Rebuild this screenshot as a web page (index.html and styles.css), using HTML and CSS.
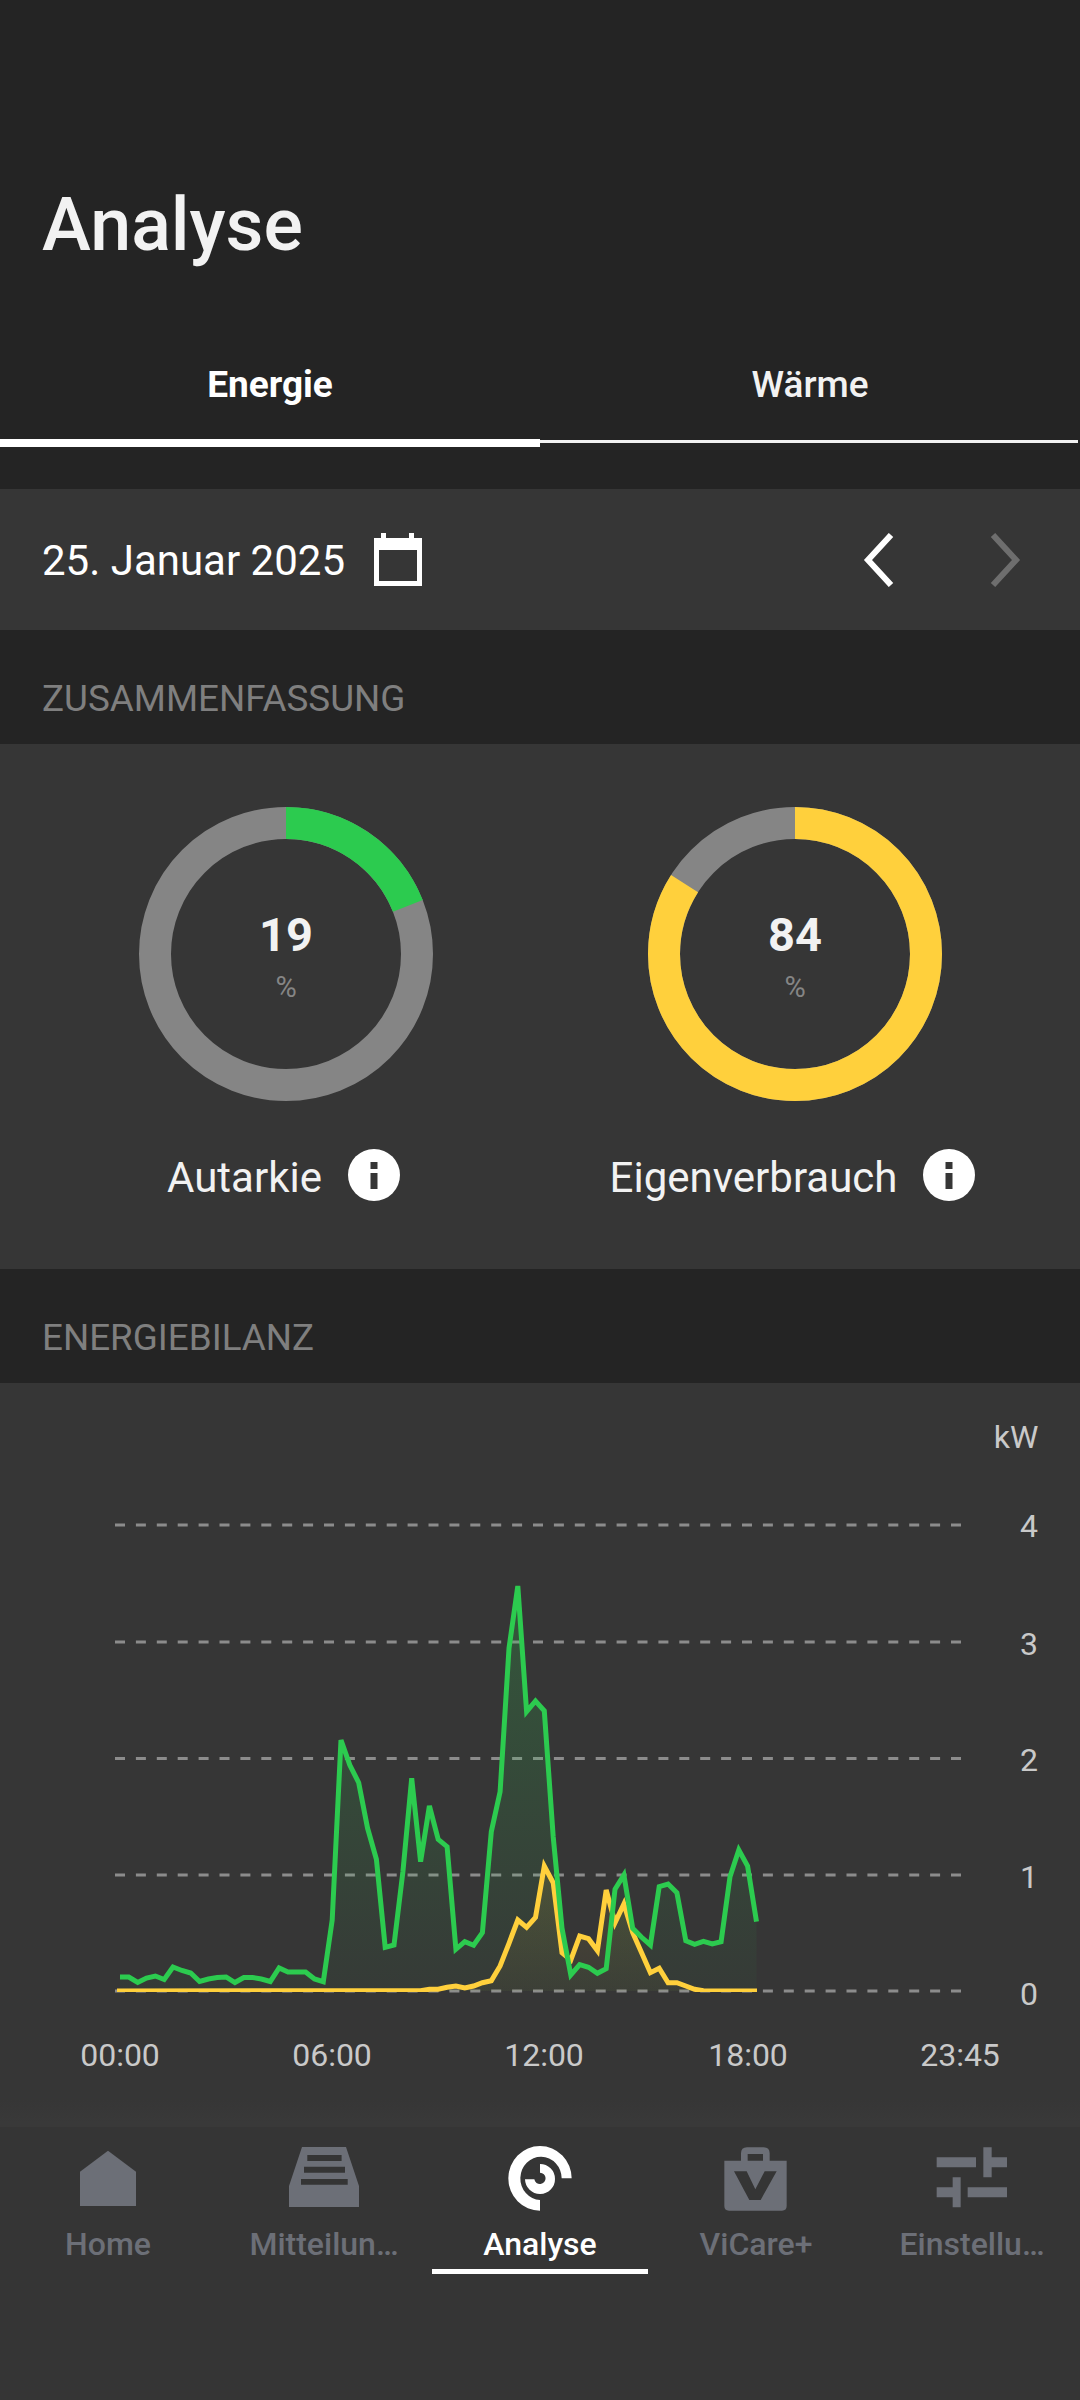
FILE: index.html
```html
<!DOCTYPE html>
<html lang="de">
<head>
    <meta charset="UTF-8">
    <meta name="viewport" content="width=device-width, initial-scale=1.0">
    <title>Analyse</title>
    <link rel="stylesheet" href="styles.css">
</head>
<body>
    <header class="page-header">
        <h1 class="page-title">Analyse</h1>
    </header>

    <div class="tabs">
        <div class="tab active">Energie</div>
        <div class="tab">Wärme</div>
    </div>

    <div class="date-row">
        <span class="date-text">25. Januar 2025</span>
        <svg class="calendar-icon" width="48" height="54" viewBox="0 0 48 54">
            <path fill="#fff" fill-rule="evenodd" d="M7 0h5v5h23V0h5v5h8v48H0V5h7zM5 17v31h38V17z"/>
        </svg>
        <div class="date-arrows">
            <svg width="32" height="54" viewBox="0 0 32 54"><path class="arrow" stroke="#fff" d="M29 2 6 27l23 25" /></svg>
            <svg width="32" height="54" viewBox="0 0 32 54"><path class="arrow" stroke="#6e6e6e" d="M4 2l23 25L4 52" /></svg>
        </div>
    </div>

    <div class="section-label">ZUSAMMENFASSUNG</div>

    <section class="summary">
        <div class="gauge">
            <svg class="donut" width="294" height="294" viewBox="0 0 294 294">
                <circle class="donut-track" cx="147" cy="147" r="131"/>
                <circle class="donut-value green" cx="147" cy="147" r="131" stroke-dasharray="156.4 823.1" transform="rotate(-90 147 147)"/>
                <text class="donut-number" x="147" y="144">19</text>
                <text class="donut-unit" x="147" y="190">%</text>
            </svg>
            <div class="gauge-label">
                <span class="gauge-text">Autarkie</span>
                <svg width="52" height="52" viewBox="0 0 52 52">
                    <circle cx="26" cy="26" r="26" fill="#fff"/>
                    <path fill="#363636" d="M22.5 13h7v7h-7zM22.5 24h7v16h-7z"/>
                </svg>
            </div>
        </div>
        <div class="gauge">
            <svg class="donut" width="294" height="294" viewBox="0 0 294 294">
                <circle class="donut-track" cx="147" cy="147" r="131"/>
                <circle class="donut-value yellow" cx="147" cy="147" r="131" stroke-dasharray="691.4 823.1" transform="rotate(-90 147 147)"/>
                <text class="donut-number" x="147" y="144">84</text>
                <text class="donut-unit" x="147" y="190">%</text>
            </svg>
            <div class="gauge-label">
                <span class="gauge-text">Eigenverbrauch</span>
                <svg width="52" height="52" viewBox="0 0 52 52">
                    <circle cx="26" cy="26" r="26" fill="#fff"/>
                    <path fill="#363636" d="M22.5 13h7v7h-7zM22.5 24h7v16h-7z"/>
                </svg>
            </div>
        </div>
    </section>

    <div class="section-label">ENERGIEBILANZ</div>

    <section class="chart-card">
        <svg class="chart" width="1080" height="744" viewBox="0 1383 1080 744">
            <defs>
                <linearGradient id="greenFill" gradientUnits="userSpaceOnUse" x1="0" y1="1586" x2="0" y2="1991">
                    <stop offset="0" stop-color="#2ccb4f" stop-opacity="0.22"/>
                    <stop offset="1" stop-color="#2ccb4f" stop-opacity="0.03"/>
                </linearGradient>
                <linearGradient id="yellowFill" gradientUnits="userSpaceOnUse" x1="0" y1="1866" x2="0" y2="1991">
                    <stop offset="0" stop-color="#ffd03c" stop-opacity="0.12"/>
                    <stop offset="1" stop-color="#ffd03c" stop-opacity="0.03"/>
                </linearGradient>
                <clipPath id="plotClip">
                    <rect x="100" y="1500" width="880" height="492"/>
                </clipPath>
            </defs>

            <path class="grid" d="M115 1525H967M115 1642H967M115 1758.500H967M115 1875H967M115 1991H967"/>

            <path fill="url(#greenFill)" d="M120 1991V1977L128.8 1977 137.7 1982.5 146.5 1978 155.4 1976 164.2 1979.5 173 1967 181.9 1970.5 190.7 1973 199.6 1981.5 208.4 1979 217.2 1977.5 226.1 1977 234.9 1982.5 243.8 1977.5 252.6 1977.5 261.4 1979 270.3 1981.5 279.1 1968 288 1972 296.8 1972 305.6 1972 314.5 1979 323.3 1981.7 332.2 1920 341 1740 349.8 1765 358.7 1782.7 367.6 1828.3 376.4 1859.3 385.2 1947.3 394 1945 402.9 1871.7 411.7 1778.3 420.6 1861.7 429.4 1806 438.2 1839.3 447.1 1846.7 455.9 1949.3 464.8 1941.7 473.6 1945.3 482.4 1932.7 491.3 1831.7 500.1 1791.7 509 1648.3 517.8 1586 526.6 1711.7 535.5 1701 544.3 1710.7 553.2 1836.7 562 1928.3 570.8 1975 579.7 1964.7 588.5 1967.3 597.4 1973.3 606.2 1968.7 615 1889.3 623.9 1875 632.7 1928.3 641.6 1937.3 650.4 1945 659.2 1886.7 668.1 1884 676.9 1892.7 685.8 1940.7 694.6 1944.3 703.4 1941.3 712.3 1944 721.1 1941.7 730 1876.7 738.8 1850 747.6 1866 756.5 1921.7V1991Z"/>
            <path fill="url(#yellowFill)" d="M420.6 1991L429.4 1989.3 438.2 1989.3 447.1 1987.3 455.9 1986 464.8 1988 473.6 1986 482.4 1982.7 491.3 1980.7 500.1 1966 509 1943.3 517.8 1920 526.6 1927.3 535.5 1917.3 544.3 1866 553.2 1882.7 562 1952.7 570.8 1960 579.7 1936 588.5 1938.7 597.4 1950.7 606.2 1890 615 1922.7 623.9 1904 632.7 1932.7 641.6 1952.7 650.4 1972.7 659.2 1968.3 668.1 1982.7 676.9 1982.7 685.8 1986 694.6 1989.3 703.4 1991Z"/>

            <polyline class="line yellow-line" clip-path="url(#plotClip)" points="117,1991 420.6,1990.7 429.4,1989.3 438.2,1989.3 447.1,1987.3 455.9,1986 464.8,1988 473.6,1986 482.4,1982.7 491.3,1980.7 500.1,1966 509,1943.3 517.8,1920 526.6,1927.3 535.5,1917.3 544.3,1866 553.2,1882.7 562,1952.7 570.8,1960 579.7,1936 588.5,1938.7 597.4,1950.7 606.2,1890 615,1922.7 623.9,1904 632.7,1932.7 641.6,1952.7 650.4,1972.7 659.2,1968.3 668.1,1982.7 676.9,1982.7 685.8,1986 694.6,1989.3 703.4,1990.7 712.3,1991 757,1991"/>
            <polyline class="line green-line" points="120,1977 128.8,1977 137.7,1982.5 146.5,1978 155.4,1976 164.2,1979.5 173,1967 181.9,1970.5 190.7,1973 199.6,1981.5 208.4,1979 217.2,1977.5 226.1,1977 234.9,1982.5 243.8,1977.5 252.6,1977.5 261.4,1979 270.3,1981.5 279.1,1968 288,1972 296.8,1972 305.6,1972 314.5,1979 323.3,1981.7 332.2,1920 341,1740 349.8,1765 358.7,1782.7 367.6,1828.3 376.4,1859.3 385.2,1947.3 394,1945 402.9,1871.7 411.7,1778.3 420.6,1861.7 429.4,1806 438.2,1839.3 447.1,1846.7 455.9,1949.3 464.8,1941.7 473.6,1945.3 482.4,1932.7 491.3,1831.7 500.1,1791.7 509,1648.3 517.8,1586 526.6,1711.7 535.5,1701 544.3,1710.7 553.2,1836.7 562,1928.3 570.8,1975 579.7,1964.7 588.5,1967.3 597.4,1973.3 606.2,1968.7 615,1889.3 623.9,1875 632.7,1928.3 641.6,1937.3 650.4,1945 659.2,1886.7 668.1,1884 676.9,1892.7 685.8,1940.7 694.6,1944.3 703.4,1941.3 712.3,1944 721.1,1941.7 730,1876.7 738.8,1850 747.6,1866 756.5,1921.7"/>

            <text class="axis" x="1016" y="1448">kW</text>
            <text class="axis" x="1029" y="1537">4</text>
            <text class="axis" x="1029" y="1655">3</text>
            <text class="axis" x="1029" y="1771">2</text>
            <text class="axis" x="1029" y="1888">1</text>
            <text class="axis" x="1029" y="2005">0</text>
            <text class="axis" x="120" y="2066">00:00</text>
            <text class="axis" x="332" y="2066">06:00</text>
            <text class="axis" x="544" y="2066">12:00</text>
            <text class="axis" x="748" y="2066">18:00</text>
            <text class="axis" x="960" y="2066">23:45</text>
        </svg>
    </section>

    <nav class="bottom-nav">
        <div class="nav-item">
            <svg class="nav-icon" width="80" height="80" viewBox="0 0 80 80">
                <path d="M12 31.7 40 10.7 68 31.7V66H12z"/>
            </svg>
            <span class="nav-label">Home</span>
        </div>
        <div class="nav-item">
            <svg class="nav-icon" width="80" height="80" viewBox="0 0 80 80">
                <path fill-rule="evenodd" d="M18 7H62L75 46V67H5V46zM23.3 15v6h34.300v-6zM20 26.700v6H61v-6zM17 39v5.700H63.700V39z"/>
            </svg>
            <span class="nav-label">Mitteilun…</span>
        </div>
        <div class="nav-item active">
            <svg class="nav-icon" width="80" height="80" viewBox="0 0 240 240">
                <path d="M215 115A95 97 0 1 0 120 212V180A62 65 0 1 1 185 115Z"/>
                <path d="M120 72A45 45 0 1 1 75 118H103A17 17 0 1 0 120 98Z"/>
            </svg>
            <span class="nav-label">Analyse</span>
        </div>
        <div class="nav-item">
            <svg class="nav-icon" width="80" height="80" viewBox="18 0 240 240">
                <path fill-rule="evenodd" d="M93 62V40Q93 22 111 22H161Q179 22 179 40V62H230V198Q230 212 216 212H57Q43 212 43 198V62ZM113 42V62H159V42ZM72 94 118 180H152L200 94H164L136 148 110 94Z"/>
            </svg>
            <span class="nav-label">ViCare+</span>
        </div>
        <div class="nav-item">
            <svg class="nav-icon" width="80" height="80" viewBox="6 0 240 240">
                <path d="M20 52H138V82H20zM160 22H185V52H231V82H185V112H160zM68 112H92V202H68V172H20V142H68zM113 142H231V172H113z"/>
            </svg>
            <span class="nav-label">Einstellu…</span>
        </div>
    </nav>
</body>
</html>
```

FILE: styles.css
```css
* {
    box-sizing: border-box;
}

body {
    font-family: "Roboto", sans-serif;
    background-color: #242424;
    color: #f2f2f2;
    width: 1080px;
    height: 2400px;
    margin: 0;
    overflow: hidden;
}

.page-header {
    height: 330px;
    padding: 183px 42px 0;
}

.page-title {
    margin: 0;
    font-size: 73.6px;
    line-height: 84px;
    font-weight: 500;
}

.tabs {
    display: flex;
    align-items: flex-start;
    height: 159px;
    padding-top: 34px;
}

.tab {
    width: 540px;
    height: 79px;
    font-size: 37px;
    line-height: 42px;
    font-weight: 500;
    text-align: center;
    border-bottom: 3px solid #f2f2f2;
    color: #f2f2f2;
}

.tab:last-child {
    width: 538px;
    padding-left: 2px;
}

.tab.active {
    height: 83px;
    font-weight: 700;
    color: #fff;
    border-bottom: 8px solid #fff;
}

.date-row {
    display: flex;
    align-items: center;
    height: 141px;
    padding: 0 59px 0 42px;
    background-color: #363636;
}

.date-text {
    font-size: 42px;
    line-height: 48px;
    margin-top: 2px;
    color: #fff;
}

.calendar-icon {
    margin-left: 29px;
}

.date-arrows {
    display: flex;
    gap: 95px;
    margin-left: auto;
}

.arrow {
    fill: none;
    stroke-width: 6;
}

.section-label {
    height: 114px;
    padding: 48px 42px 0;
    font-size: 36.8px;
    line-height: 42px;
    color: #7f7f7f;
}

.summary {
    display: grid;
    grid-template-columns: 1fr 1fr;
    height: 525px;
    padding: 63px 30.5px 0 31.5px;
    background-color: #363636;
}

.gauge {
    display: flex;
    flex-direction: column;
    align-items: center;
}

.donut-track,
.donut-value {
    fill: none;
    stroke-width: 32;
}

.donut-track {
    stroke: #858585;
}

.donut-value.green {
    stroke: #2ccb4f;
}

.donut-value.yellow {
    stroke: #ffd03c;
}

.donut-number {
    font-size: 47px;
    font-weight: 700;
    fill: #f2f2f2;
    text-anchor: middle;
}

.donut-unit {
    font-size: 29px;
    fill: #858585;
    text-anchor: middle;
}

.gauge-label {
    display: flex;
    align-items: center;
    gap: 26px;
    margin-top: 47px;
    margin-left: -5px;
}

.gauge-text {
    font-size: 42px;
    line-height: 48px;
    margin-top: 6px;
}

.chart-card {
    height: 744px;
    background: linear-gradient(to bottom, #363636 717px, #393939 740px);
}

.chart {
    display: block;
}

.grid {
    fill: none;
    stroke: #8c8c8c;
    stroke-width: 3;
    stroke-dasharray: 10 10.9;
}

.line {
    fill: none;
    stroke-width: 5;
}

.green-line {
    stroke: #2ccb4f;
}

.yellow-line {
    stroke: #ffd03c;
}

.axis {
    font-size: 32px;
    fill: #c9c9c9;
    text-anchor: middle;
}

.bottom-nav {
    display: flex;
    height: 273px;
    padding-top: 13px;
    background-color: #353535;
}

.nav-item {
    display: flex;
    flex-direction: column;
    align-items: center;
    width: 216px;
    height: 134px;
    color: #6c6f77;
    border-bottom: 5px solid transparent;
}

.nav-icon {
    display: block;
    fill: #6c6f77;
}

.nav-label {
    margin-top: 5px;
    font-size: 32px;
    line-height: 38px;
    font-weight: 500;
    white-space: nowrap;
}

.nav-item.active {
    color: #fff;
    border-bottom-color: #fff;
}

.nav-item.active .nav-icon {
    fill: #fff;
}
```
